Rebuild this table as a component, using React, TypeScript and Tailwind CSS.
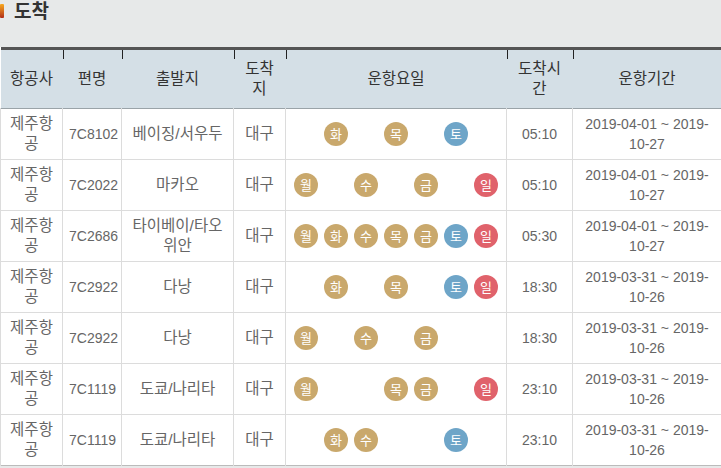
import React from "react";

type Row = {
  airline: string;
  flight: string;
  from: string;
  to: string;
  days: string[];
  time: string;
  period: string;
};

const DAYS = ["월", "화", "수", "목", "금", "토", "일"];

const rows: Row[] = [
  { airline: "제주항공", flight: "7C8102", from: "베이징/서우두", to: "대구", days: ["화", "목", "토"], time: "05:10", period: "2019-04-01 ~ 2019-10-27" },
  { airline: "제주항공", flight: "7C2022", from: "마카오", to: "대구", days: ["월", "수", "금", "일"], time: "05:10", period: "2019-04-01 ~ 2019-10-27" },
  { airline: "제주항공", flight: "7C2686", from: "타이베이/타오위안", to: "대구", days: ["월", "화", "수", "목", "금", "토", "일"], time: "05:30", period: "2019-04-01 ~ 2019-10-27" },
  { airline: "제주항공", flight: "7C2922", from: "다낭", to: "대구", days: ["화", "목", "토", "일"], time: "18:30", period: "2019-03-31 ~ 2019-10-26" },
  { airline: "제주항공", flight: "7C2922", from: "다낭", to: "대구", days: ["월", "수", "금"], time: "18:30", period: "2019-03-31 ~ 2019-10-26" },
  { airline: "제주항공", flight: "7C1119", from: "도쿄/나리타", to: "대구", days: ["월", "목", "금", "일"], time: "23:10", period: "2019-03-31 ~ 2019-10-26" },
  { airline: "제주항공", flight: "7C1119", from: "도쿄/나리타", to: "대구", days: ["화", "수", "토"], time: "23:10", period: "2019-03-31 ~ 2019-10-26" },
];

function DayDot({ d, on }: { d: string; on: boolean }) {
  const color = d === "토" ? "bg-[#6ea5c8]" : d === "일" ? "bg-[#e0626b]" : "bg-[#c9a86c]";
  return (
    <span
      className={`mx-[3px] inline-flex h-[24px] w-[24px] items-center justify-center rounded-full align-middle text-[13px] leading-none text-white ${color} ${on ? "" : "invisible"}`}
    >
      {d}
    </span>
  );
}

const headers = ["항공사", "편명", "출발지", "도착지", "운항요일", "도착시간", "운항기간"];
const widths = [62, 59, 112, 52, 221, 66, 149];

const kCell = "border-x border-[#dcdcdc] px-[6px] py-[5px] text-center text-[15.5px] leading-[20px] text-[#666]";
const nCell = "border-x border-[#dcdcdc] px-[6px] py-[5px] text-center text-[14px] leading-[20px] text-[#666]";

export default function App() {
  return (
    <div
      className="min-h-[468px] w-[721px] bg-[#e7e9e9] text-[14px]"
      style={{ fontFamily: '"Liberation Sans", "Noto Sans CJK KR", sans-serif' }}
    >
      <div className="flex h-[47px] items-start">
        <span className="mt-[4px] h-[14px] w-[4px] rounded-[1px] bg-gradient-to-b from-[#f7a81e] to-[#b02a17]" />
        <h2 className="ml-[10px] text-[19px] font-bold leading-[24px] text-[#333]">도착</h2>
      </div>
      <table className="w-[721px] table-fixed border-collapse border-t-[3px] border-[#555] bg-white">
        <colgroup>
          {widths.map((w, i) => (
            <col key={i} style={{ width: w }} />
          ))}
        </colgroup>
        <thead>
          <tr className="border-b border-[#9aa3a8] bg-[#d4dfe6]">
            {headers.map((h, i) => (
              <th
                key={h}
                className="relative px-[6px] py-[9px] text-center text-[15.5px] font-normal leading-[20px] text-[#333]"
              >
                {i > 0 && <span className="absolute left-0 top-0 h-[9px] w-[1px] bg-[#222]" />}
                {h}
              </th>
            ))}
          </tr>
        </thead>
        <tbody>
          {rows.map((r, idx) => (
            <tr key={idx} className={`border-b ${idx === rows.length - 1 ? "border-[#bbb]" : "border-[#dcdcdc]"}`}>
              <td className={kCell}>{r.airline}</td>
              <td className={nCell}>{r.flight}</td>
              <td className={kCell}>{r.from}</td>
              <td className={kCell}>{r.to}</td>
              <td className="border-x border-[#dcdcdc] px-0 py-[5px] text-center leading-[20px]">
                <div className="flex h-[40px] items-center justify-center">
                  {DAYS.map((d) => (
                    <DayDot key={d} d={d} on={r.days.includes(d)} />
                  ))}
                </div>
              </td>
              <td className={nCell}>{r.time}</td>
              <td className={nCell}>{r.period}</td>
            </tr>
          ))}
        </tbody>
      </table>
    </div>
  );
}
